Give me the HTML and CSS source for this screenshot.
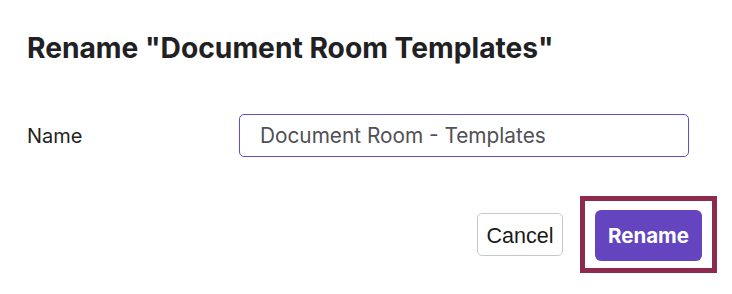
FILE: index.html
```html
<!DOCTYPE html>
<html lang="en">
<head>
<meta charset="utf-8">
<title>Rename</title>
<link rel="stylesheet" href="styles.css">
</head>
<body>
<div class="dialog">
  <h1 class="title">Rename "Document Room Templates"</h1>
  <div class="field-row">
    <label class="field-label" for="name">Name</label>
    <input class="field-input" id="name" type="text" value="Document Room - Templates">
  </div>
  <div class="footer">
    <button class="btn-cancel" type="button">Cancel</button>
    <div class="highlight">
      <button class="btn-primary" type="button">Rename</button>
    </div>
  </div>
</div>
</body>
</html>
```

FILE: styles.css
```css
html, body {
  margin: 0;
  padding: 0;
  background: #ffffff;
}

body {
  width: 732px;
  height: 294px;
  overflow: hidden;
  font-family: Inter, "Noto Sans", sans-serif;
  color: #1f1f21;
}

.dialog {
  padding: 31px 15px 0 27px;
}

.title {
  margin: 0;
  font-size: 28.2px;
  line-height: 34px;
  font-weight: 700;
  color: #212124;
}

.field-row {
  display: flex;
  align-items: center;
  margin-top: 49px;
}

.field-label {
  width: 212px;
  font-size: 20px;
  color: #1f1f21;
}

.field-input {
  box-sizing: border-box;
  width: 450px;
  height: 43px;
  margin: 0;
  padding: 0 20px;
  border: 1px solid #6a4cc4;
  border-radius: 5px;
  font-family: Inter, "Noto Sans", sans-serif;
  font-size: 20.8px;
  color: #505055;
  background: #fff;
  outline: none;
}

.footer {
  display: flex;
  justify-content: flex-end;
  align-items: center;
  gap: 17px;
  margin-top: 39px;
}

.btn-cancel {
  box-sizing: border-box;
  width: 86px;
  height: 43px;
  margin: 0;
  padding: 3px 0 0 0;
  border: 1px solid #c8c8c8;
  border-radius: 5px;
  background: #fff;
  font-family: "Liberation Sans", Arial, sans-serif;
  font-size: 21.5px;
  color: #1a1a1a;
}

.highlight {
  box-sizing: border-box;
  width: 137px;
  height: 77px;
  padding: 9px 10px 7px 10px;
  border: 5px solid #8d2a4e;
}

.btn-primary {
  box-sizing: border-box;
  width: 107px;
  height: 51px;
  margin: 0;
  padding: 0;
  border: none;
  border-radius: 6px;
  background: #6544c0;
  color: #ffffff;
  font-family: Inter, "Noto Sans", sans-serif;
  font-weight: 700;
  font-size: 20.5px;
}
```
